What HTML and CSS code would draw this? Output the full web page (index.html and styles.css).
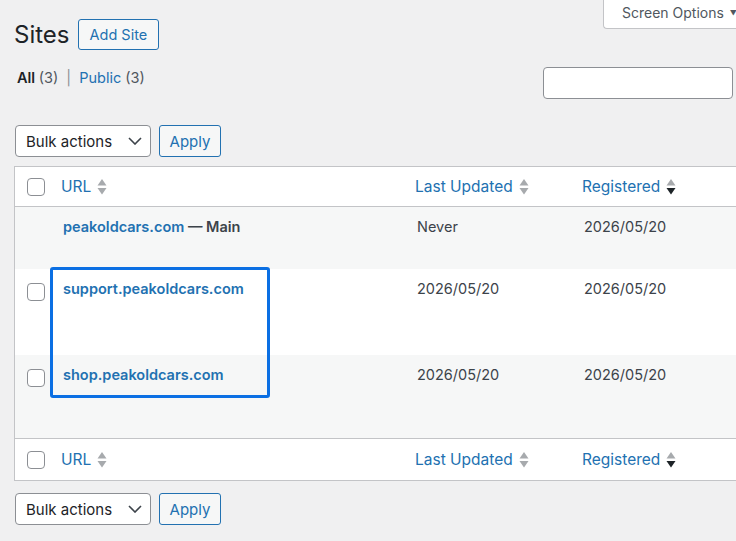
FILE: index.html
```html
<!DOCTYPE html>
<html lang="en">
<head>
  <meta charset="UTF-8" />
  <meta name="viewport" content="width=device-width, initial-scale=1.0"/>
  <title>Sites</title>
  <link rel="stylesheet" href="styles.css">
</head>
<body>
  <div class="screen-meta">
    <button class="screen-options">Screen Options <span class="caret">&#9660;</span></button>
  </div>

  <div class="wrap">
    <div class="title-row">
      <h1>Sites</h1>
      <a class="page-title-action">Add Site</a>
    </div>

    <div class="filter-row">
      <ul class="subsubsub">
        <li><a class="current">All <span class="count">(3)</span></a><span class="sep">|</span></li>
        <li><a>Public <span class="count">(3)</span></a></li>
      </ul>
      <input type="search" class="search-input">
    </div>

    <div class="tablenav">
      <div class="select">Bulk actions
        <svg width="14" height="8" viewBox="0 0 14 8"><path d="M1 1 L7 7 L13 1" fill="none" stroke="#3c434a" stroke-width="1.6"/></svg>
      </div>
      <button class="button">Apply</button>
    </div>

    <div class="list-table">
      <div class="row head">
        <div class="cell check"><span class="checkbox"></span></div>
        <div class="cell"><a>URL</a><svg class="sort" width="10" height="18" viewBox="0 0 10 18"><path d="M0.5 7.5 L5 1 L9.5 7.5 Z" fill="#a7aaad"/><path d="M0.5 10 L5 16.5 L9.5 10 Z" fill="#a7aaad"/></svg></div>
        <div class="cell"><a>Last Updated</a><svg class="sort" width="10" height="18" viewBox="0 0 10 18"><path d="M0.5 7.5 L5 1 L9.5 7.5 Z" fill="#a7aaad"/><path d="M0.5 10 L5 16.5 L9.5 10 Z" fill="#a7aaad"/></svg></div>
        <div class="cell"><a>Registered</a><svg class="sort" width="10" height="18" viewBox="0 0 10 18"><path d="M0.5 7.5 L5 1 L9.5 7.5 Z" fill="#a7aaad"/><path d="M0.5 10 L5 16.5 L9.5 10 Z" fill="#1d2327"/></svg></div>
      </div>

      <div class="row site alt r1">
        <div class="cell check"></div>
        <div class="cell"><a class="site-link">peakoldcars.com</a><strong class="main"> &mdash; Main</strong></div>
        <div class="cell">Never</div>
        <div class="cell">2026/05/20</div>
      </div>

      <div class="row site r2">
        <div class="cell check"><span class="checkbox"></span></div>
        <div class="cell"><a class="site-link">support.peakoldcars.com</a></div>
        <div class="cell">2026/05/20</div>
        <div class="cell">2026/05/20</div>
      </div>

      <div class="row site alt r3">
        <div class="cell check"><span class="checkbox"></span></div>
        <div class="cell"><a class="site-link">shop.peakoldcars.com</a></div>
        <div class="cell">2026/05/20</div>
        <div class="cell">2026/05/20</div>
      </div>

      <div class="row head foot">
        <div class="cell check"><span class="checkbox"></span></div>
        <div class="cell"><a>URL</a><svg class="sort" width="10" height="18" viewBox="0 0 10 18"><path d="M0.5 7.5 L5 1 L9.5 7.5 Z" fill="#a7aaad"/><path d="M0.5 10 L5 16.5 L9.5 10 Z" fill="#a7aaad"/></svg></div>
        <div class="cell"><a>Last Updated</a><svg class="sort" width="10" height="18" viewBox="0 0 10 18"><path d="M0.5 7.5 L5 1 L9.5 7.5 Z" fill="#a7aaad"/><path d="M0.5 10 L5 16.5 L9.5 10 Z" fill="#a7aaad"/></svg></div>
        <div class="cell"><a>Registered</a><svg class="sort" width="10" height="18" viewBox="0 0 10 18"><path d="M0.5 7.5 L5 1 L9.5 7.5 Z" fill="#a7aaad"/><path d="M0.5 10 L5 16.5 L9.5 10 Z" fill="#1d2327"/></svg></div>
      </div>
    </div>

    <div class="tablenav bottom">
      <div class="select">Bulk actions
        <svg width="14" height="8" viewBox="0 0 14 8"><path d="M1 1 L7 7 L13 1" fill="none" stroke="#3c434a" stroke-width="1.6"/></svg>
      </div>
      <button class="button">Apply</button>
    </div>
  </div>

  <div class="highlight"></div>
</body>
</html>
```

FILE: styles.css
```css
:root {
  --bg: #f0f0f1;
  --link: #2271b1;
  --text: #1d2327;
  --muted: #50575e;
  --border: #c3c4c7;
  --input-border: #8c8f94;
  --stripe: #f6f7f7;
  --highlight: #0b6fe3;
}

* {
  box-sizing: border-box;
  margin: 0;
  padding: 0;
}

body {
  font-family: Inter, "Liberation Sans", Arial, sans-serif;
  background: var(--bg);
  color: var(--text);
  width: 736px;
  height: 541px;
  overflow: hidden;
  position: relative;
}

a {
  color: var(--link);
  text-decoration: none;
}

.screen-meta {
  position: absolute;
  top: -1px;
  left: 603px;
}

.screen-options {
  width: 133px;
  height: 30px;
  padding: 0 0 4px 18px;
  text-align: left;
  white-space: nowrap;
  background: #fff;
  border: 1px solid var(--border);
  border-right: none;
  border-radius: 0 0 0 4px;
  font-family: inherit;
  font-size: 14px;
  color: var(--muted);
}

.caret {
  font-size: 7px;
  margin-left: 2px;
  vertical-align: 2px;
}

.wrap {
  padding: 19px 0 0 14px;
}

.title-row {
  display: flex;
  align-items: center;
  gap: 8px;
  height: 31px;
}

h1 {
  font-size: 24px;
  font-weight: 400;
  color: var(--text);
}

.page-title-action {
  display: inline-block;
  height: 31px;
  line-height: 29px;
  padding: 0 11px;
  border: 1px solid var(--link);
  border-radius: 3px;
  background: var(--stripe);
  font-size: 14.5px;
}

.filter-row {
  display: flex;
  justify-content: space-between;
  align-items: flex-start;
  margin-top: 18px;
  padding-right: 3px;
}

.subsubsub {
  list-style: none;
  display: flex;
  font-size: 14.5px;
  line-height: 20px;
  margin-left: 3px;
}

.subsubsub .current {
  color: var(--text);
  font-weight: 600;
}

.subsubsub .count {
  color: var(--muted);
  font-weight: 400;
}

.sep {
  color: #8c8f94;
  margin: 0 8px;
}

.search-input {
  width: 190px;
  height: 32px;
  margin-top: -1px;
  background: #fff;
  border: 1px solid var(--input-border);
  border-radius: 4px;
}

.tablenav {
  display: flex;
  gap: 8px;
  margin-top: 26px;
  margin-left: 1px;
}

.tablenav.bottom {
  margin-top: 12px;
}

.select {
  width: 136px;
  height: 32px;
  display: flex;
  align-items: center;
  justify-content: space-between;
  padding: 0 8px 0 10px;
  background: #fff;
  border: 1px solid var(--input-border);
  border-radius: 4px;
  font-size: 15px;
  color: var(--text);
}

.button {
  width: 62px;
  height: 32px;
  background: var(--stripe);
  border: 1px solid var(--link);
  border-radius: 3px;
  color: var(--link);
  font-family: inherit;
  font-size: 15px;
}

.list-table {
  width: 760px;
  margin-top: 9px;
  background: #fff;
  border: 1px solid var(--border);
}

.row {
  display: grid;
  grid-template-columns: 46px 354px 167px 1fr;
}

.row.head {
  height: 40px;
  align-items: center;
  border-bottom: 1px solid var(--border);
  font-size: 15.5px;
}

.row.head .cell {
  display: flex;
  align-items: center;
}

.row.foot {
  height: 42px;
  border-bottom: none;
  border-top: 1px solid var(--border);
}

.row.head .check {
  padding: 1px 0 0 12px;
}

.checkbox {
  display: block;
  width: 18px;
  height: 18px;
  background: #fff;
  border: 1px solid var(--input-border);
  border-radius: 4px;
}

.sort {
  display: block;
  margin-left: 6px;
  margin-top: 1px;
}

.row.site {
  align-items: start;
  padding-top: 10px;
  font-size: 14.5px;
  line-height: 20px;
  color: #3c434a;
}

.row.site .cell {
  padding-left: 2px;
}

.row.site .check {
  padding: 4px 0 0 12px;
}

.row.alt {
  background: var(--stripe);
}

.r1 { height: 62px; }
.r2 { height: 86px; padding-top: 12px; }
.r3 { height: 83px; padding-top: 11px; }

.site-link,
.main {
  font-weight: 600;
}

.main {
  color: #3c434a;
}

.highlight {
  position: absolute;
  left: 50px;
  top: 267px;
  width: 220px;
  height: 131px;
  border: 3px solid var(--highlight);
  border-radius: 3px;
}
```
